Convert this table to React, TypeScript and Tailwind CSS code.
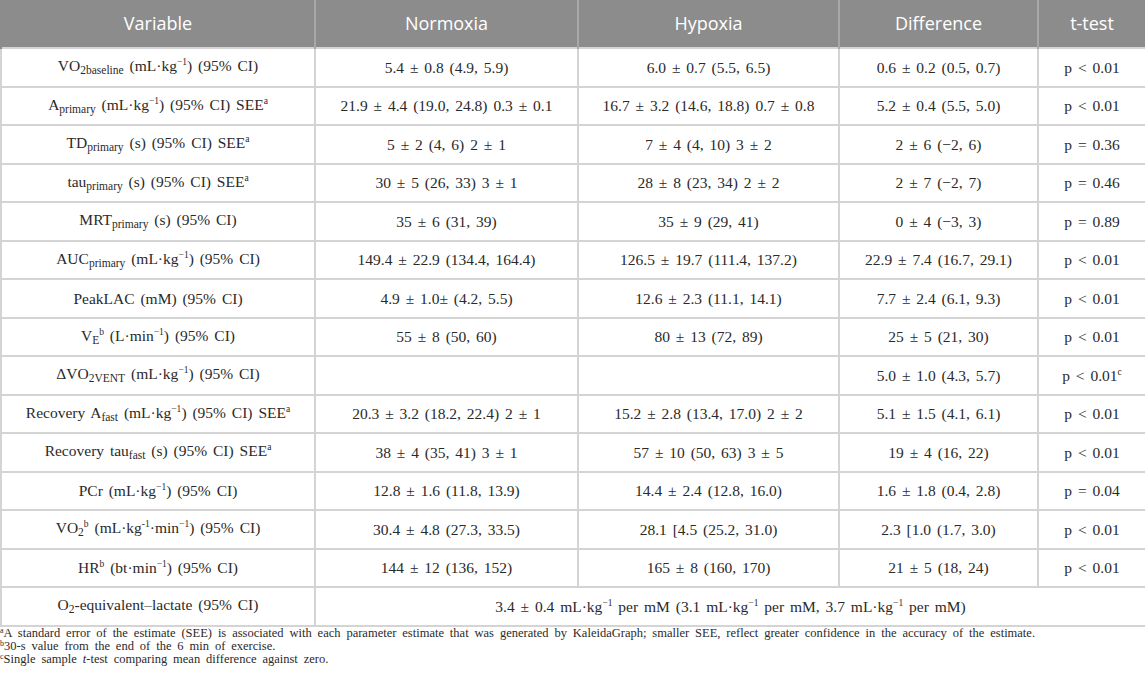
import React from "react";

const serif = { fontFamily: '"Liberation Serif", "DejaVu Serif", serif' };

const Sub = ({ children }: { children: React.ReactNode }) => (
  <span className="align-[-3px] text-[11.5px] leading-none">{children}</span>
);
const Sup = ({ children }: { children: React.ReactNode }) => (
  <span className="align-[6px] text-[9.5px] leading-none">{children}</span>
);
const Neg1 = () => <Sup>−1</Sup>;
const FnMark = ({ children }: { children: React.ReactNode }) => (
  <span className="align-[4px] text-[8px] leading-none">{children}</span>
);

type Row = [React.ReactNode, React.ReactNode, React.ReactNode, React.ReactNode, React.ReactNode];

const rows: Row[] = [
  [<>VO<Sub>2baseline</Sub> (mL·kg<Neg1 />) (95% CI)</>, "5.4 ± 0.8 (4.9, 5.9)", "6.0 ± 0.7 (5.5, 6.5)", "0.6 ± 0.2 (0.5, 0.7)", "p < 0.01"],
  [<>A<Sub>primary</Sub> (mL·kg<Neg1 />) (95% CI) SEE<Sup>a</Sup></>, "21.9 ± 4.4 (19.0, 24.8) 0.3 ± 0.1", "16.7 ± 3.2 (14.6, 18.8) 0.7 ± 0.8", "5.2 ± 0.4 (5.5, 5.0)", "p < 0.01"],
  [<>TD<Sub>primary</Sub> (s) (95% CI) SEE<Sup>a</Sup></>, "5 ± 2 (4, 6) 2 ± 1", "7 ± 4 (4, 10) 3 ± 2", "2 ± 6 (−2, 6)", "p = 0.36"],
  [<>tau<Sub>primary</Sub> (s) (95% CI) SEE<Sup>a</Sup></>, "30 ± 5 (26, 33) 3 ± 1", "28 ± 8 (23, 34) 2 ± 2", "2 ± 7 (−2, 7)", "p = 0.46"],
  [<>MRT<Sub>primary</Sub> (s) (95% CI)</>, "35 ± 6 (31, 39)", "35 ± 9 (29, 41)", "0 ± 4 (−3, 3)", "p = 0.89"],
  [<>AUC<Sub>primary</Sub> (mL·kg<Neg1 />) (95% CI)</>, "149.4 ± 22.9 (134.4, 164.4)", "126.5 ± 19.7 (111.4, 137.2)", "22.9 ± 7.4 (16.7, 29.1)", "p < 0.01"],
  [<>PeakLAC (mM) (95% CI)</>, "4.9 ± 1.0± (4.2, 5.5)", "12.6 ± 2.3 (11.1, 14.1)", "7.7 ± 2.4 (6.1, 9.3)", "p < 0.01"],
  [<>V<Sub>E</Sub><Sup>b</Sup> (L·min<Neg1 />) (95% CI)</>, "55 ± 8 (50, 60)", "80 ± 13 (72, 89)", "25 ± 5 (21, 30)", "p < 0.01"],
  [<>ΔVO<Sub>2VENT</Sub> (mL·kg<Neg1 />) (95% CI)</>, "", "", "5.0 ± 1.0 (4.3, 5.7)", <>p &lt; 0.01<Sup>c</Sup></>],
  [<>Recovery A<Sub>fast</Sub> (mL·kg<Neg1 />) (95% CI) SEE<Sup>a</Sup></>, "20.3 ± 3.2 (18.2, 22.4) 2 ± 1", "15.2 ± 2.8 (13.4, 17.0) 2 ± 2", "5.1 ± 1.5 (4.1, 6.1)", "p < 0.01"],
  [<>Recovery tau<Sub>fast</Sub> (s) (95% CI) SEE<Sup>a</Sup></>, "38 ± 4 (35, 41) 3 ± 1", "57 ± 10 (50, 63) 3 ± 5", "19 ± 4 (16, 22)", "p < 0.01"],
  [<>PCr (mL·kg<Neg1 />) (95% CI)</>, "12.8 ± 1.6 (11.8, 13.9)", "14.4 ± 2.4 (12.8, 16.0)", "1.6 ± 1.8 (0.4, 2.8)", "p = 0.04"],
  [<>VO<Sub>2</Sub><Sup>b</Sup> (mL·kg<Sup>-1</Sup>·min<Neg1 />) (95% CI)</>, "30.4 ± 4.8 (27.3, 33.5)", "28.1 [4.5 (25.2, 31.0)", "2.3 [1.0 (1.7, 3.0)", "p < 0.01"],
  [<>HR<Sup>b</Sup> (bt·min<Neg1 />) (95% CI)</>, "144 ± 12 (136, 152)", "165 ± 8 (160, 170)", "21 ± 5 (18, 24)", "p < 0.01"],
];

export default function App() {
  const td = "border-2 border-[#d4d4d4] text-center align-middle p-0 whitespace-nowrap leading-none";
  const th = "border-x-2 border-[#a8a8a8] first:border-l-[#8c8c8c] last:border-r-[#8c8c8c] text-center align-middle font-normal p-0";
  return (
    <div className="w-[1145px] h-[691px] bg-white text-[#2a2a2a] overflow-hidden">
      <table className="w-[1145px] table-fixed border-collapse" style={serif}>
        <colgroup>
          <col className="w-[314px]" />
          <col className="w-[263px]" />
          <col className="w-[261px]" />
          <col className="w-[199px]" />
          <col className="w-[108px]" />
        </colgroup>
        <thead>
          <tr className="h-[48px] bg-[#8c8c8c] text-white text-[18px]" style={{ fontFamily: '"Open Sans", "Noto Sans", sans-serif' }}>
            <th className={th}>Variable</th>
            <th className={th}>Normoxia</th>
            <th className={th}>Hypoxia</th>
            <th className={th}>Difference</th>
            <th className={th}>t-test</th>
          </tr>
        </thead>
        <tbody className="text-[15.5px] [word-spacing:2px]">
          {rows.map((r, i) => (
            <tr key={i} className="h-[38.5px]">
              {r.map((c, j) => (
                <td key={j} className={td}>{c}</td>
              ))}
            </tr>
          ))}
          <tr className="h-[38.5px]">
            <td className={td}>O<Sub>2</Sub>-equivalent–lactate (95% CI)</td>
            <td className={td} colSpan={4}>
              3.4 ± 0.4 mL·kg<Neg1 /> per mM (3.1 mL·kg<Neg1 /> per mM, 3.7 mL·kg<Neg1 /> per mM)
            </td>
          </tr>
        </tbody>
      </table>
      <div className="flex flex-col text-[12.5px] leading-[13px] [word-spacing:2.8px]" style={serif}>
        <p><FnMark>a</FnMark>A standard error of the estimate (SEE) is associated with each parameter estimate that was generated by KaleidaGraph; smaller SEE, reflect greater confidence in the accuracy of the estimate.</p>
        <p><FnMark>b</FnMark>30-s value from the end of the 6 min of exercise.</p>
        <p><FnMark>c</FnMark>Single sample <i>t</i>-test comparing mean difference against zero.</p>
      </div>
    </div>
  );
}
